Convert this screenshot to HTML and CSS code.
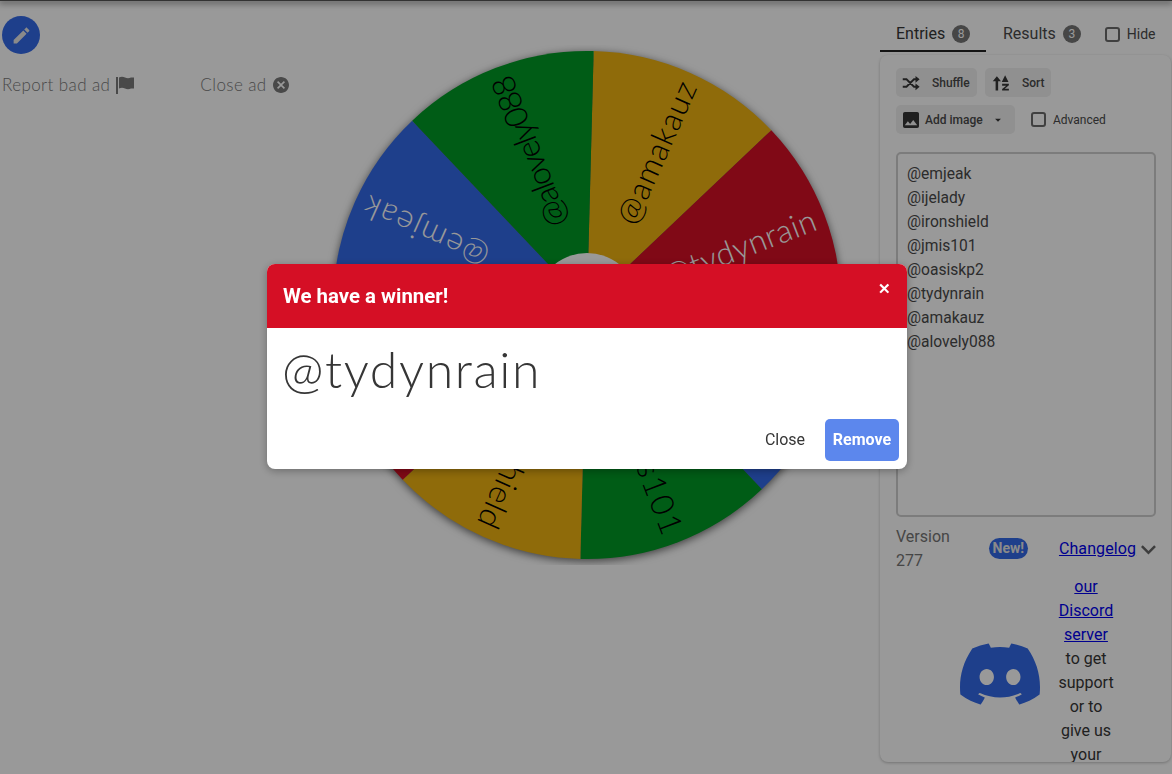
FILE: index.html
```html
<!DOCTYPE html>
<html lang="en">
<head>
    <meta charset="UTF-8">
    <meta name="viewport" content="width=device-width, initial-scale=1.0">
    <title>Wheel of Names</title>
    <link rel="stylesheet" href="styles.css">
</head>
<body>
    <div class="navbar"></div>

    <div class="page">
        <div class="tools">
            <button type="button" class="edit-btn">
                <svg viewBox="0 0 24 24" class="edit-icon"><path d="M20.71,7.04C21.1,6.65 21.1,6 20.71,5.63L18.37,3.29C18,2.9 17.35,2.9 16.96,3.29L15.12,5.12L18.87,8.87M3,17.25V21H6.75L17.81,9.93L14.06,6.18L3,17.25Z"/></svg>
            </button>
            <div class="ad-links">
                <div class="ad-link">
                    Report bad ad
                    <svg viewBox="0 0 18 18" class="ad-icon flag"><path d="M0 1h2v17H0zM3 1.500c2-1 4-1 6 0s4 1 6 0h3v11h-3c-2 1-4 1-6 0s-4-1-6 0z"/></svg>
                </div>
                <div class="ad-link">
                    Close ad
                    <svg viewBox="2 2 20 20" class="ad-icon"><path d="M12,2C17.53,2 22,6.47 22,12C22,17.53 17.53,22 12,22C6.47,22 2,17.53 2,12C2,6.47 6.47,2 12,2M15.59,7L12,10.59L8.41,7L7,8.41L10.59,12L7,15.59L8.41,17L12,13.41L15.59,17L17,15.59L13.41,12L17,8.41L15.59,7Z"/></svg>
                </div>
            </div>
        </div>

        <div class="wheel-area">
            <svg class="wheel" viewBox="-260 -260 520 520">
                <g class="wheel-slices">
                    <path class="yellow" d="M0 0L6.65 -253.9A254 254 0 0 1 184.3 -174.8Z"/>
                    <path class="red" d="M0 0L184.3 -174.8A254 254 0 0 1 253.9 6.65Z"/>
                    <path class="blue" d="M0 0L253.9 6.65A254 254 0 0 1 174.8 184.3Z"/>
                    <path class="green" d="M0 0L174.8 184.3A254 254 0 0 1 -6.65 253.9Z"/>
                    <path class="yellow" d="M0 0L-6.65 253.9A254 254 0 0 1 -184.3 174.8Z"/>
                    <path class="red" d="M0 0L-184.3 174.8A254 254 0 0 1 -253.9 -6.65Z"/>
                    <path class="blue" d="M0 0L-253.9 -6.65A254 254 0 0 1 -174.8 -184.3Z"/>
                    <path class="green" d="M0 0L-174.8 -184.3A254 254 0 0 1 6.65 -253.9Z"/>
                </g>
                <circle class="wheel-hub" r="52"/>
                <text class="slice-text dark" transform="rotate(-66)" x="244" textLength="153">@amakauz</text>
                <text class="slice-text light" transform="rotate(-21)" x="244">@tydynrain</text>
                <text class="slice-text light" transform="rotate(24)" x="244">@oasiskp2</text>
                <text class="slice-text dark" transform="rotate(69)" x="244" textLength="150">@jmis101</text>
                <text class="slice-text dark" transform="rotate(114)" x="244">@ironshield</text>
                <text class="slice-text light" transform="rotate(159)" x="244">@ijelady</text>
                <text class="slice-text light" transform="rotate(204)" x="244" textLength="134">@emjeak</text>
                <text class="slice-text dark" transform="rotate(249)" x="244" textLength="160">@alovely088</text>
            </svg>
        </div>

        <div class="sidebar">
            <div class="tabs">
                <div class="tab active">Entries <span class="count">8</span></div>
                <div class="tab">Results <span class="count">3</span></div>
                <label class="hide-check"><span class="checkbox"></span>Hide</label>
            </div>

            <div class="panel">
                <div class="btn-row">
                    <div class="small-btn btn-shuffle">
                        <svg viewBox="0 0 24 24" class="btn-icon"><path class="stroke" d="M1 7h5l10 10h3M1 17h5l10-10h3"/><path d="M18 2.500l5.500 4.500-5.500 4.500zM18 12.500l5.500 4.500-5.500 4.500z"/></svg>
                        Shuffle
                    </div>
                    <div class="small-btn btn-sort">
                        <svg viewBox="0 0 24 24" class="btn-icon"><path d="M6.500 3l5.500 6.500H8.200V22H4.800V9.500H1z"/><path d="M17.500 1.500l4.500 9h-9zM13.500 13h9v2l-5.500 4.500h5.500V22h-9v-2l5.500-4.500h-5.500z"/></svg>
                        Sort
                    </div>
                </div>
                <div class="btn-row">
                    <div class="small-btn btn-image">
                        <svg viewBox="3 3 18 18" class="image-icon"><path d="M8.5,13.5L11,16.5L14.5,12L19,18H5M21,19V5C21,3.89 20.1,3 19,3H5A2,2 0 0,0 3,5V19A2,2 0 0,0 5,21H19A2,2 0 0,0 21,19Z"/></svg>
                        <span class="btn-label">Add image</span>
                        <svg viewBox="0 0 24 24" class="caret-icon"><path d="M7,10L12,15L17,10H7Z"/></svg>
                    </div>
                    <label class="advanced-check"><span class="checkbox"></span>Advanced</label>
                </div>

                <div class="entries">
                    <div>@emjeak</div>
                    <div>@ijelady</div>
                    <div>@ironshield</div>
                    <div>@jmis101</div>
                    <div>@oasiskp2</div>
                    <div>@tydynrain</div>
                    <div>@amakauz</div>
                    <div>@alovely088</div>
                </div>

                <div class="version-row">
                    <div class="version">Version 277</div>
                    <span class="new-tag">New!</span>
                    <a href="#" class="changelog">Changelog</a>
                    <svg viewBox="6 8 12 8" class="chevron"><path d="M7.41,8.58L12,13.17L16.59,8.58L18,10L12,16L6,10L7.41,8.58Z"/></svg>
                </div>

                <div class="discord-row">
                    <svg viewBox="0 0 24 24" class="discord-logo"><path d="M20.317 4.3698a19.7913 19.7913 0 00-4.8851-1.5152.0741.0741 0 00-.0785.0371c-.211.3753-.4447.8648-.6083 1.2495-1.8447-.2762-3.68-.2762-5.4868 0-.1636-.3933-.4058-.8742-.6177-1.2495a.077.077 0 00-.0785-.037 19.7363 19.7363 0 00-4.8852 1.515.0699.0699 0 00-.0321.0277C.5334 9.0458-.319 13.5799.0992 18.0578a.0824.0824 0 00.0312.0561c2.0528 1.5076 4.0413 2.4228 5.9929 3.0294a.0777.0777 0 00.0842-.0276c.4616-.6304.8731-1.2952 1.226-1.9942a.076.076 0 00-.0416-.1057c-.6528-.2476-1.2743-.5495-1.8722-.8923a.077.077 0 01-.0076-.1277c.1258-.0943.2517-.1923.3718-.2914a.0743.0743 0 01.0776-.0105c3.9278 1.7933 8.18 1.7933 12.0614 0a.0739.0739 0 01.0785.0095c.1202.099.246.1981.3728.2924a.077.077 0 01-.0066.1276 12.2986 12.2986 0 01-1.873.8914.0766.0766 0 00-.0407.1067c.3604.698.7719 1.3628 1.225 1.9932a.076.076 0 00.0842.0286c1.961-.6067 3.9495-1.5219 6.0023-3.0294a.077.077 0 00.0313-.0552c.5004-5.177-.8382-9.6739-3.5485-13.6604a.061.061 0 00-.0312-.0286zM8.02 15.3312c-1.1825 0-2.1569-1.0857-2.1569-2.419 0-1.3332.9555-2.4189 2.157-2.4189 1.2108 0 2.1757 1.0952 2.1568 2.419 0 1.3332-.9555 2.4189-2.1569 2.4189zm7.9748 0c-1.1825 0-2.1569-1.0857-2.1569-2.419 0-1.3332.9554-2.4189 2.1569-2.4189 1.2108 0 2.1757 1.0952 2.1568 2.419 0 1.3332-.946 2.4189-2.1568 2.4189Z"/></svg>
                    <p class="discord-text"><a href="#">our Discord server</a> to get support or to give us your feedback</p>
                </div>
            </div>
        </div>
    </div>

    <div class="overlay">
        <div class="modal">
            <div class="modal-head">
                <span class="modal-title">We have a winner!</span>
                <span class="modal-close">✕</span>
            </div>
            <div class="modal-body">@tydynrain</div>
            <div class="modal-foot">
                <button type="button" class="close-btn">Close</button>
                <button type="button" class="remove-btn">Remove</button>
            </div>
        </div>
    </div>
</body>
</html>
```

FILE: styles.css
```css
* {
    margin: 0;
    padding: 0;
    box-sizing: border-box;
}

body {
    font-family: Roboto, Arial, sans-serif;
    background: white;
    color: #363636;
    height: 774px;
    overflow: hidden;
}

.navbar {
    height: 1px;
    background-color: #555;
    box-shadow: 0 1px 6px 1px rgba(0, 0, 0, 0.6);
}

.page {
    display: flex;
    height: 773px;
}

.tools {
    width: 327px;
    flex-shrink: 0;
    padding: 15px 0 0 2px;
}

.edit-btn {
    width: 38px;
    height: 38px;
    border-radius: 50%;
    border: none;
    background-color: #3369e8;
    display: flex;
    align-items: center;
    justify-content: center;
}

.edit-icon {
    width: 21px;
    height: 21px;
    fill: #e6e6e6;
}

.ad-links {
    display: flex;
    gap: 66px;
    margin-top: 19px;
}

.ad-link {
    display: flex;
    align-items: center;
    gap: 6px;
    font-family: Lato, sans-serif;
    font-weight: 300;
    font-size: 17px;
    letter-spacing: 0.4px;
    line-height: 24px;
    color: #7a7a7a;
    white-space: nowrap;
}

.ad-icon {
    width: 16px;
    height: 16px;
    fill: #7a7a7a;
}

.ad-icon.flag {
    width: 18px;
    height: 18px;
}

.wheel-area {
    width: 553px;
    flex-shrink: 0;
    padding-top: 44px;
}

.wheel {
    display: block;
    width: 520px;
    height: 520px;
}

.wheel-slices {
    filter: drop-shadow(0 2px 4px rgba(0, 0, 0, 0.6));
}

.yellow { fill: #eeb211; }
.red { fill: #d50f25; }
.blue { fill: #3369e8; }
.green { fill: #009925; }

.wheel-hub {
    fill: white;
}

.slice-text {
    font-family: Lato, sans-serif;
    font-weight: 300;
    font-size: 32px;
    letter-spacing: 0.5px;
    text-anchor: end;
    dominant-baseline: central;
}

.slice-text.dark { fill: black; }
.slice-text.light { fill: white; }

.sidebar {
    width: 292px;
    flex-shrink: 0;
}

.tabs {
    display: flex;
    align-items: center;
    height: 51px;
    padding-top: 15px;
}

.tab {
    height: 36px;
    padding: 8px 16px 0 17px;
    font-size: 16px;
    color: #4a4a4a;
    white-space: nowrap;
}

.tab.active {
    width: 106px;
    padding: 8px 0 0 16px;
    color: #363636;
    border-bottom: 2px solid #222;
}

.count {
    display: inline-block;
    width: 18px;
    height: 18px;
    margin-left: 3px;
    border-radius: 50%;
    background-color: #757575;
    color: white;
    font-size: 12px;
    line-height: 18px;
    text-align: center;
    vertical-align: 1px;
}

.checkbox {
    width: 15px;
    height: 15px;
    border: 2px solid #6b6b6b;
    border-radius: 3px;
    background: white;
    flex-shrink: 0;
}

.hide-check {
    display: flex;
    align-items: center;
    gap: 7px;
    font-size: 14px;
    color: #4a4a4a;
    margin-left: 8px;
}

.panel {
    width: 291px;
    height: 707px;
    margin-top: 3px;
    padding: 13px 15px 0 16px;
    border-radius: 8px;
    overflow: hidden;
    box-shadow: 0 1px 3px rgba(0, 0, 0, 0.25);
}

.btn-row {
    display: flex;
    align-items: center;
    gap: 8px;
    margin-bottom: 8px;
}

.small-btn {
    display: flex;
    align-items: center;
    height: 29px;
    padding: 0 6px;
    border-radius: 5px;
    background-color: #f0f0f0;
    font-size: 12px;
    font-weight: 500;
    color: #4a4a4a;
    white-space: nowrap;
}

.btn-shuffle { width: 81px; gap: 12px; }
.btn-sort { width: 66px; gap: 12px; padding-left: 7px; }
.btn-image { width: 119px; gap: 6px; padding-left: 7px; }

.btn-icon {
    width: 18px;
    height: 18px;
    fill: #363636;
}

.btn-icon .stroke {
    fill: none;
    stroke: #363636;
    stroke-width: 2.4;
}

.image-icon {
    width: 16px;
    height: 16px;
    flex-shrink: 0;
    fill: #363636;
}

.caret-icon {
    width: 14px;
    height: 14px;
    margin-left: 2px;
    flex-shrink: 0;
    fill: #363636;
}

.advanced-check {
    display: flex;
    align-items: center;
    gap: 7px;
    margin-left: 8px;
    font-size: 12px;
    color: #4a4a4a;
}

.entries {
    height: 365px;
    margin-top: 18px;
    padding: 8px 9px;
    border: 2px solid #cfcfcf;
    border-radius: 5px;
    font-size: 15.6px;
    line-height: 24px;
    color: #4a4a4a;
}

.version-row {
    display: flex;
    align-items: center;
    margin-top: 8px;
    font-size: 16px;
    line-height: 24px;
}

.version {
    width: 93px;
    padding-right: 30px;
    color: #757575;
}

.new-tag {
    width: 42px;
    height: 21px;
    margin: 0 0 1px 4px;
    border-radius: 11px;
    background-color: #3369e8;
    color: #e6e6e6;
    font-size: 14px;
    font-weight: 700;
    line-height: 21px;
    text-align: center;
}

.changelog {
    margin-left: 31px;
    letter-spacing: 0.1px;
    color: #0000ee;
}

.chevron {
    width: 16px;
    height: 11px;
    margin-left: 5px;
    fill: #666;
}

.discord-row {
    display: flex;
    margin-top: 2px;
    padding-left: 64px;
}

.discord-logo {
    width: 80px;
    height: 80px;
    margin-top: 59px;
    flex-shrink: 0;
    fill: #3369e8;
}

.discord-text {
    width: 60px;
    margin-left: 16px;
    font-size: 16px;
    line-height: 24px;
    text-align: center;
    color: #363636;
}

.discord-text a {
    color: #0000ee;
}

.overlay {
    position: fixed;
    inset: 0;
    display: flex;
    justify-content: center;
    align-items: flex-start;
    padding: 264px 0 0 2px;
    background: rgba(0, 0, 0, 0.4);
}

.modal {
    width: 640px;
    height: 205px;
    border-radius: 8px;
    overflow: hidden;
    background: white;
    box-shadow: 0 2px 8px rgba(0, 0, 0, 0.3);
}

.modal-head {
    display: flex;
    justify-content: space-between;
    height: 64px;
    padding: 0 16px;
    background-color: #d50f25;
    color: white;
}

.modal-title {
    font-size: 20.4px;
    font-weight: 700;
    line-height: 64px;
}

.modal-close {
    font-size: 15px;
    font-weight: 700;
    line-height: 50px;
}

.modal-body {
    height: 91px;
    padding: 11px 15px 0;
    font-family: Lato, sans-serif;
    font-weight: 300;
    font-size: 50px;
    letter-spacing: 1.6px;
    line-height: 60px;
    color: #363636;
}

.modal-foot {
    display: flex;
    justify-content: flex-end;
    align-items: center;
    gap: 4px;
    padding-right: 8px;
}

.close-btn,
.remove-btn {
    height: 42px;
    padding-bottom: 2px;
    border: none;
    border-radius: 5px;
    font-family: Roboto, Arial, sans-serif;
    font-size: 16px;
}

.close-btn {
    width: 72px;
    background: white;
    color: #363636;
}

.remove-btn {
    width: 74px;
    background-color: #5c87ed;
    color: white;
    font-weight: 700;
}
```
